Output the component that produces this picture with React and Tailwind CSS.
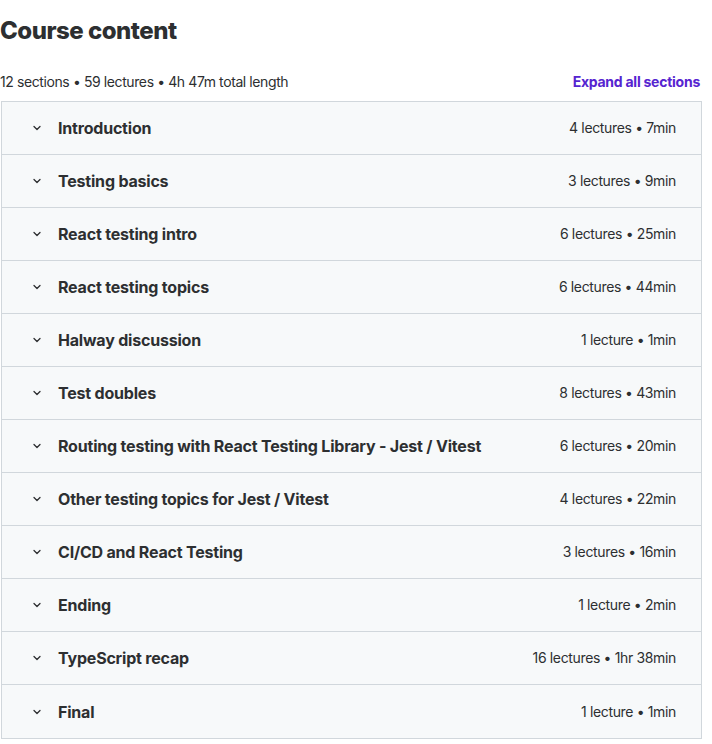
import React from "react";

const sections = [
  ["Introduction", "4 lectures • 7min"],
  ["Testing basics", "3 lectures • 9min"],
  ["React testing intro", "6 lectures • 25min"],
  ["React testing topics", "6 lectures • 44min"],
  ["Halway discussion", "1 lecture • 1min"],
  ["Test doubles", "8 lectures • 43min"],
  ["Routing testing with React Testing Library - Jest / Vitest", "6 lectures • 20min"],
  ["Other testing topics for Jest / Vitest", "4 lectures • 22min"],
  ["CI/CD and React Testing", "3 lectures • 16min"],
  ["Ending", "1 lecture • 2min"],
  ["TypeScript recap", "16 lectures • 1hr 38min"],
  ["Final", "1 lecture • 1min"],
];

function Chevron() {
  return (
    <svg width="10" height="10" viewBox="0 0 10 10" fill="none" className="text-[#2d2f31]">
      <path d="M2 3.5 L5 6.5 L8 3.5" stroke="currentColor" strokeWidth="1.3" strokeLinecap="round" strokeLinejoin="round" />
    </svg>
  );
}

export default function App() {
  return (
    <div className="w-[712px] bg-white text-[#2d2f31]" style={{ fontFamily: "Inter, 'Noto Sans', sans-serif" }}>
      <h2 className="text-[24px] font-extrabold leading-[30px] pt-[16px] tracking-[-0.5px]">Course content</h2>
      <div className="flex items-center justify-between pt-[25px] pb-[8px] pr-[12px]">
        <span className="text-[14px] leading-[22px] tracking-[-0.4px]">12 sections • 59 lectures • 4h 47m total length</span>
        <button className="text-[14px] font-bold text-[#5624d0] leading-[22px] tracking-[-0.25px]">Expand all sections</button>
      </div>
      <div className="ml-[1px] w-[701px] border border-[#d1d7dc]">
        {sections.map(([title, meta], i) => (
          <div
            key={i}
            className={`flex items-center h-[53px] bg-[#f7f9fa] pl-[30px] pr-[25px] ${i < sections.length - 1 ? "border-b border-[#d1d7dc]" : ""}`}
          >
            <Chevron />
            <span className="ml-[16px] flex-1 text-[16px] font-bold leading-[22px] tracking-[-0.2px]">{title}</span>
            <span className="text-[14px] leading-[22px] tracking-[-0.35px]">{meta}</span>
          </div>
        ))}
      </div>
    </div>
  );
}
